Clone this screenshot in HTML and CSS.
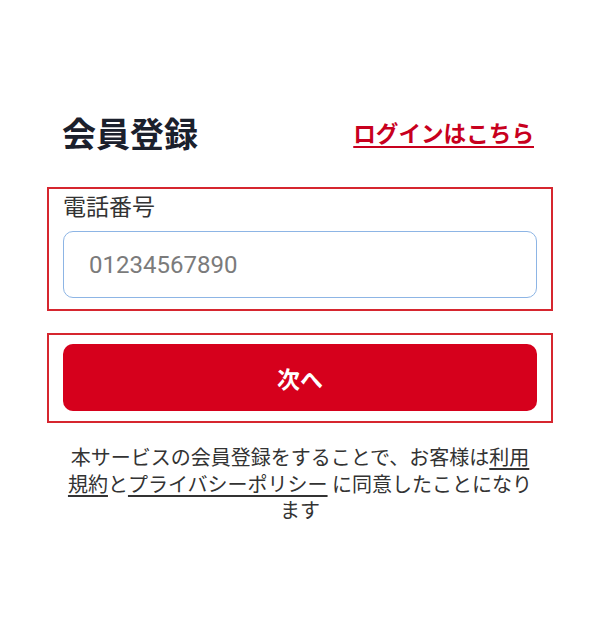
FILE: index.html
```html
<!DOCTYPE html>
<html lang="ja">
<head>
<meta charset="utf-8">
<title>会員登録</title>
<link rel="stylesheet" href="styles.css">
</head>
<body>
<div class="page">
  <header class="header">
    <h1 class="title">会員登録</h1>
    <a class="login-link" href="#">ログインはこちら</a>
  </header>
  <div class="frame field-frame">
    <label class="field-label" for="tel">電話番号</label>
    <input id="tel" class="phone-input" type="tel" placeholder="01234567890">
  </div>
  <div class="frame button-frame">
    <button class="next-btn" type="button">次へ</button>
  </div>
  <p class="terms">本サービスの会員登録をすることで、お客様は<a class="terms-link" href="#">利用規約</a>と<a class="terms-link" href="#">プライバシーポリシー</a> に同意したことになります</p>
</div>
</body>
</html>
```
FILE: styles.css
```css
html, body {
  margin: 0;
  padding: 0;
  background: #ffffff;
}
body {
  font-family: "Roboto", "Noto Sans CJK JP", sans-serif;
  color: #333333;
}
.page {
  padding: 110px 46px 0 47px;
}
.header {
  display: flex;
  justify-content: space-between;
  align-items: center;
  height: 46px;
  padding: 0 19px 0 15px;
}
.title {
  margin: 0;
  font-family: "Noto Sans CJK JP", sans-serif;
  font-size: 34px;
  font-weight: 700;
  line-height: 46px;
  color: #1b202c;
}
.login-link {
  font-family: "Noto Sans CJK JP", sans-serif;
  font-size: 22.6px;
  font-weight: 700;
  line-height: 30px;
  color: #c8001e;
  text-decoration: underline;
  text-decoration-thickness: 2px;
  text-underline-offset: 4px;
}
.frame {
  border: 2px solid #d6262f;
  padding: 0 14px;
}
.field-frame {
  margin-top: 31px;
  padding-top: 1px;
  padding-bottom: 11px;
  display: flex;
  flex-direction: column;
}
.field-label {
  font-family: "Noto Sans CJK JP", sans-serif;
  font-size: 23px;
  line-height: 30px;
  color: #333333;
}
.phone-input {
  margin-top: 11px;
  box-sizing: border-box;
  height: 67px;
  width: 100%;
  border: 1.5px solid #8db5e5;
  border-radius: 10px;
  padding: 0 25px;
  font-family: "Roboto", sans-serif;
  font-size: 24px;
  color: #333333;
  background: #ffffff;
  outline: none;
}
.phone-input::placeholder {
  color: #7b7b7b;
}
.button-frame {
  margin-top: 22px;
  padding-top: 9px;
  padding-bottom: 10px;
}
.next-btn {
  display: block;
  width: 100%;
  height: 67px;
  border: none;
  border-radius: 10px;
  background: #d6001c;
  color: #ffffff;
  font-family: "Noto Sans CJK JP", sans-serif;
  font-size: 23px;
  font-weight: 700;
  cursor: pointer;
}
.terms {
  margin: 21px 0 0;
  padding: 0 15px;
  text-align: center;
  font-family: "Noto Sans CJK JP", sans-serif;
  font-size: 20px;
  line-height: 26.5px;
  color: #333333;
}
.terms-link {
  color: #333333;
  text-decoration: underline;
  text-underline-offset: 3px;
}
```
